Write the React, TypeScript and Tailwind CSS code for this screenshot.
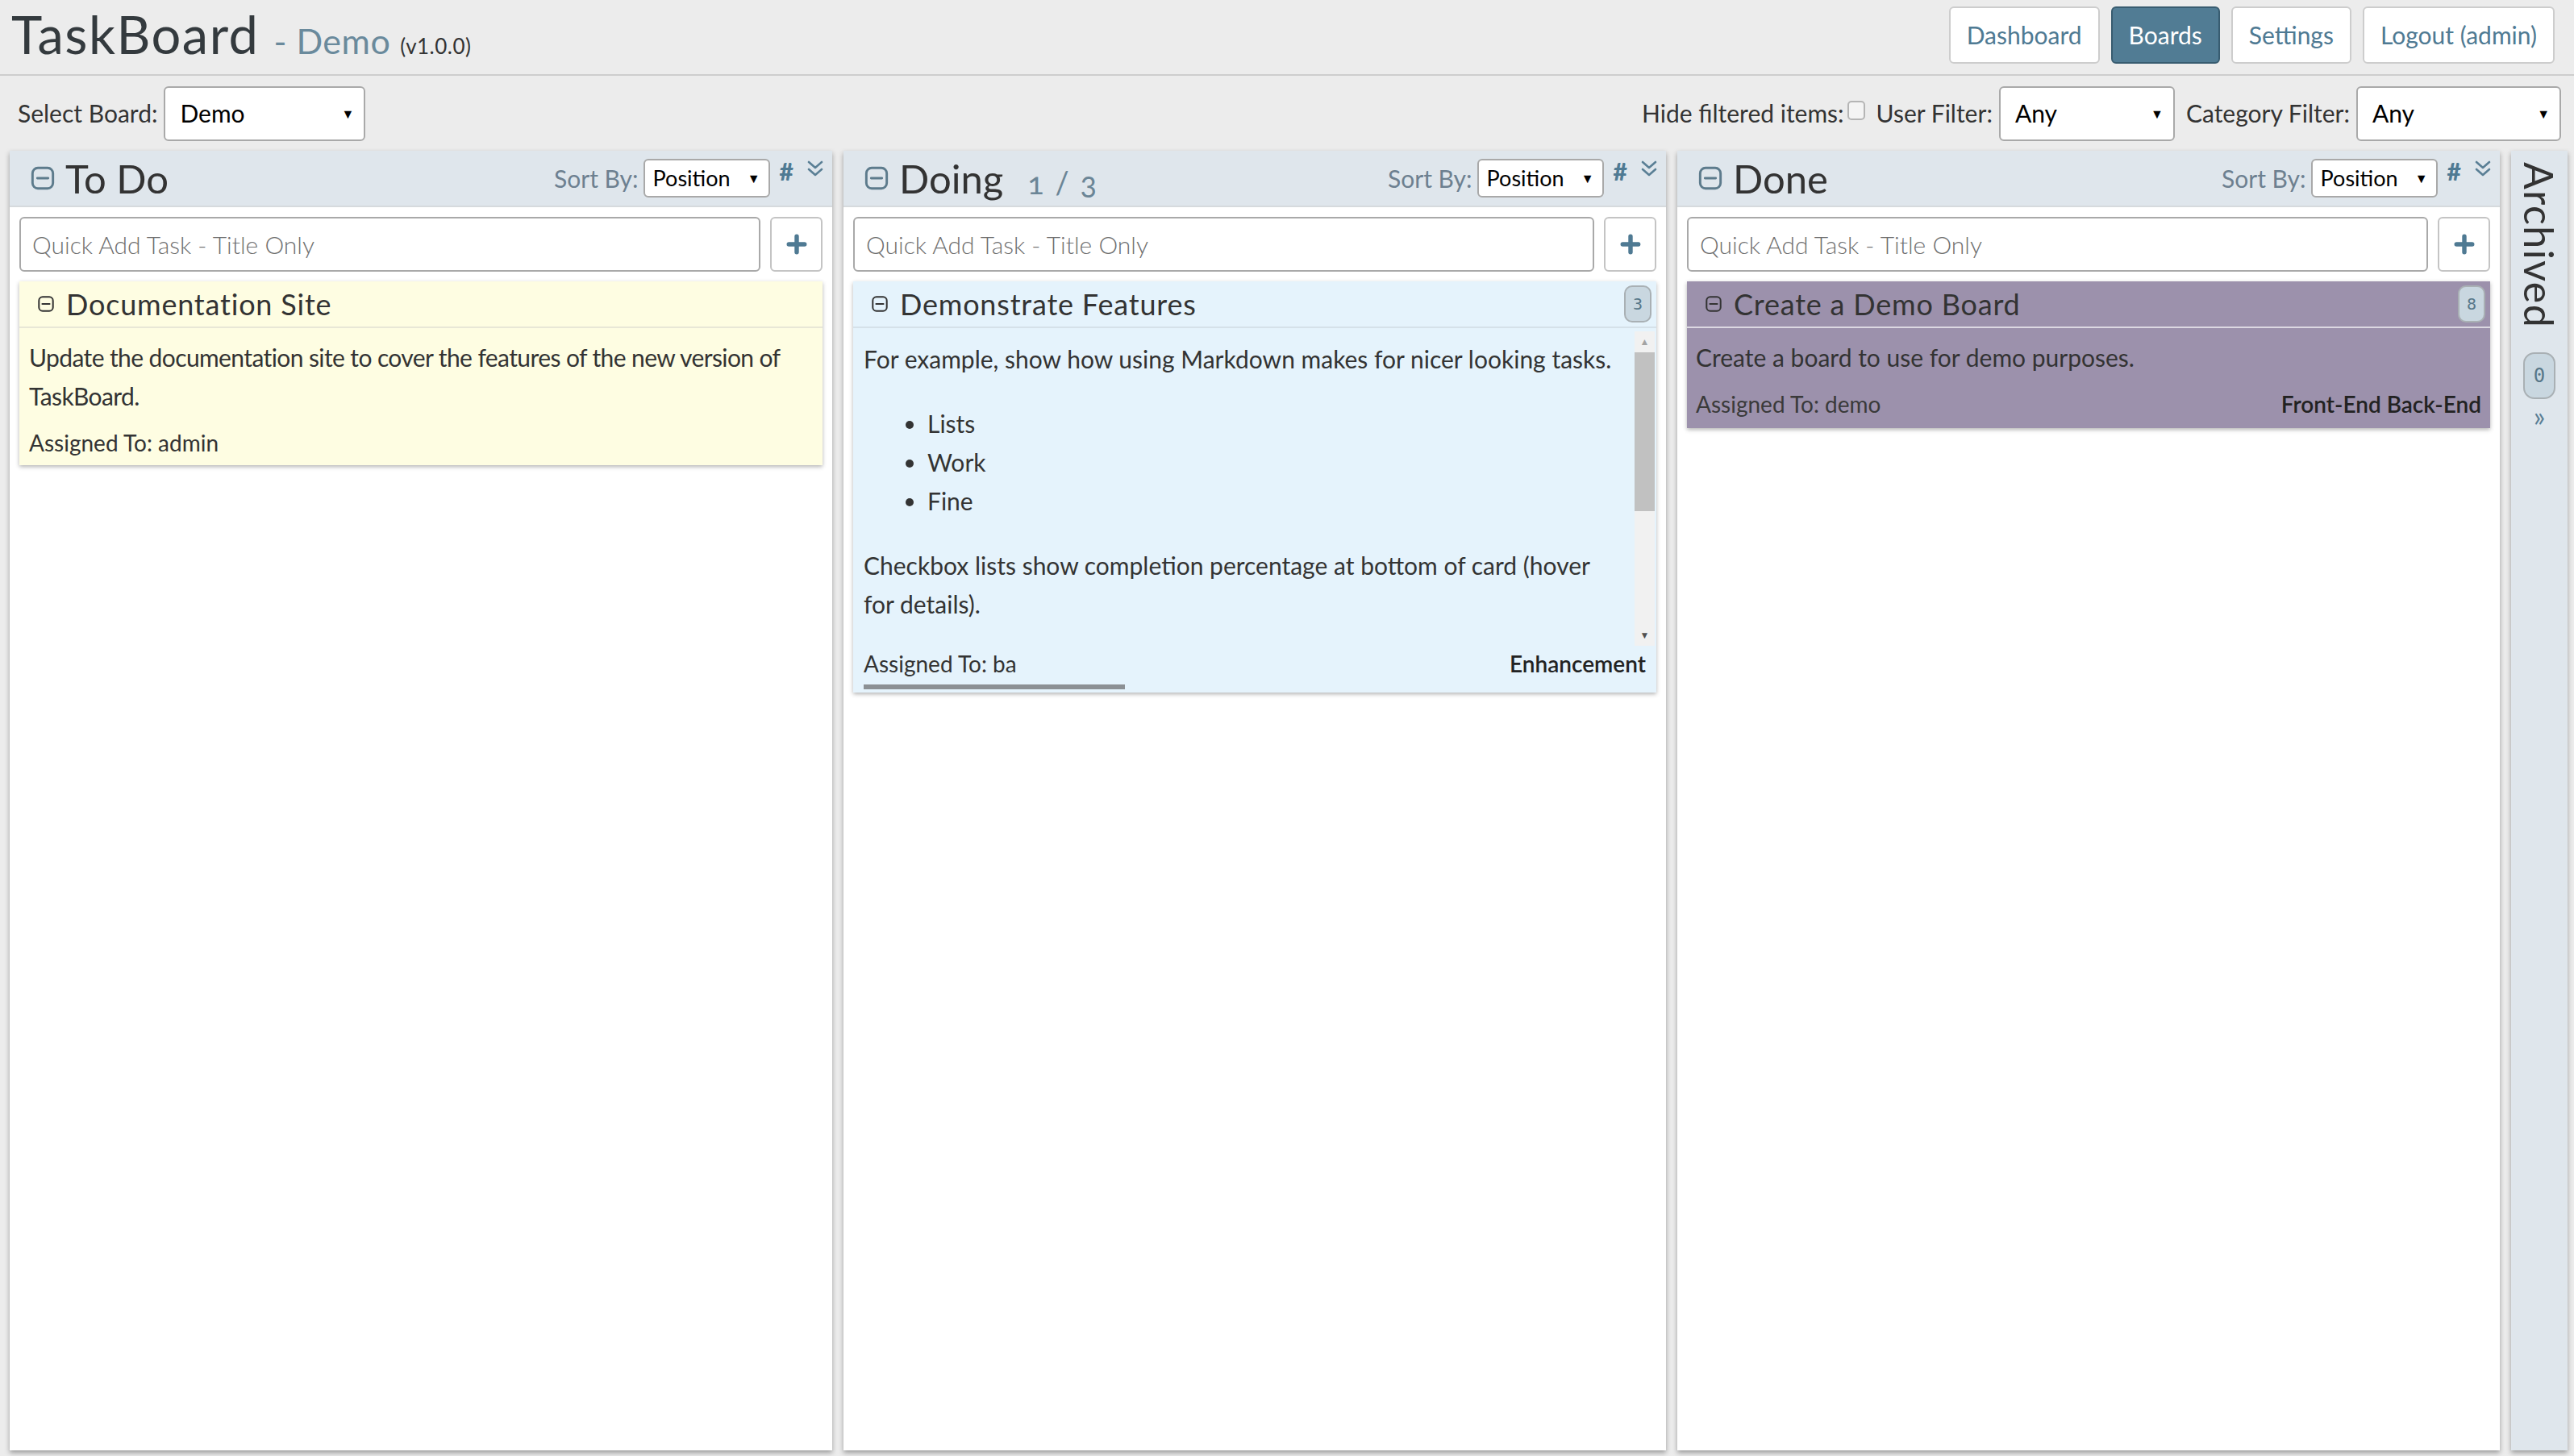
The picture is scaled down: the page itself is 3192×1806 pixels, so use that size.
import React from "react";

function MinusBox({ className }: { className: string }) {
  return (
    <svg aria-hidden="true" className={className} viewBox="0 0 24 24" fill="none">
      <rect x="2.5" y="2.5" width="19" height="19" rx="5" stroke="currentColor" strokeWidth="2.2" />
      <path d="M7 12h10" stroke="currentColor" strokeWidth="2.2" strokeLinecap="round" />
    </svg>
  );
}

function PlusIcon() {
  return (
    <svg aria-hidden="true" className="h-[26px] w-[26px] text-[#4f7a93]" viewBox="0 0 24 24" fill="none">
      <path d="M12 3v18M3 12h18" stroke="currentColor" strokeWidth="5" strokeLinecap="round" />
    </svg>
  );
}

function ChevronsDown() {
  return (
    <svg aria-hidden="true" className="h-[26px] w-[22px] text-[#5a7f95]" viewBox="0 0 22 26" fill="none">
      <path d="M3 4l8 7 8-7M3 13l8 7 8-7" stroke="currentColor" strokeWidth="2.6" strokeLinecap="round" strokeLinejoin="round" />
    </svg>
  );
}

function Badge({ n, big }: { n: string; big?: boolean }) {
  return (
    <span
      className={
        big
          ? "flex h-[58px] w-[40px] items-center justify-center rounded-[14px] border-2 border-[#a9b0b4] bg-[#c9d7e0] font-['DejaVu_Sans_Mono',monospace] text-[24px] text-[#587789]"
          : "flex h-[46px] w-[34px] items-center justify-center rounded-[10px] border-2 border-[#a9b0b4] bg-[#c9d7e0] font-['DejaVu_Sans_Mono',monospace] text-[20px] text-[#587789]"
      }
    >
      {n}
    </span>
  );
}

function Arrow() {
  return <span className="text-[16px] leading-none text-black">▼</span>;
}

function ColumnHeader({ title, extra }: { title: string; extra?: React.ReactNode }) {
  return (
    <div className="flex h-[70px] shrink-0 items-center justify-between border-b-2 border-[#d6dadd] bg-[#dfe6ec] pl-[25px] pr-[10px]">
      <div className="flex items-center">
        <MinusBox className="h-[32px] w-[32px] text-[#5d7b8c]" />
        <span className="ml-[12px] text-[49px] leading-none text-[#333]">{title}</span>
        {extra}
      </div>
      <div className="flex h-full items-center">
        <span className="text-[30px] text-[#6d8090]">Sort By:</span>
        <div className="ml-[6px] flex h-[48px] w-[157px] items-center justify-between rounded-[6px] border-2 border-[#a9a9a9] bg-white pl-[10px] pr-[10px] text-[27px] text-black">
          <span>Position</span>
          <Arrow />
        </div>
        <div className="ml-[12px] flex gap-[16px] self-start pt-[10px]">
          <span className="text-[30px] font-black leading-none text-[#4f7a93]">#</span>
          <ChevronsDown />
        </div>
      </div>
    </div>
  );
}

function QuickAdd() {
  return (
    <div className="flex gap-[12px]">
      <div className="flex h-[68px] flex-1 items-center rounded-[6px] border-2 border-[#a9a9a9] bg-white pl-[14px] text-[30px] font-light text-[#6f6f6f]">
        Quick Add Task - Title Only
      </div>
      <div className="flex h-[68px] w-[65px] items-center justify-center rounded-[6px] border-2 border-[#c4c4c4] bg-white">
        <PlusIcon />
      </div>
    </div>
  );
}

export default function App() {
  return (
    <div className="h-[1806px] overflow-hidden bg-[#ececec] font-['Lato','Open_Sans',sans-serif] text-[#333]">
      <header className="flex h-[94px] items-start justify-between border-b-2 border-[#cdcdcd] pl-[14px] pr-[24px]">
        <div className="flex items-baseline">
          <h1 className="text-[65px] leading-[84px] tracking-[1.5px] text-[#343a3e]">TaskBoard</h1>
          <span className="ml-[18px] text-[43px] tracking-[0.5px] text-[#6a8a9c]">- Demo</span>
          <span className="ml-[12px] text-[26px] tracking-[0.5px] text-[#333]">(v1.0.0)</span>
        </div>
        <nav className="flex gap-[14px] pt-[8px]">
          <span className="flex h-[71px] items-center rounded-[6px] border-2 border-[#cdcdcd] bg-white px-[20px] text-[30px] text-[#4f7a93]">Dashboard</span>
          <span className="flex h-[71px] items-center rounded-[6px] border-2 border-[#385c70] bg-[#517c94] px-[20px] text-[30px] text-white">Boards</span>
          <span className="flex h-[71px] items-center rounded-[6px] border-2 border-[#cdcdcd] bg-white px-[20px] text-[30px] text-[#4f7a93]">Settings</span>
          <span className="flex h-[71px] items-center rounded-[6px] border-2 border-[#cdcdcd] bg-white px-[20px] text-[30px] text-[#4f7a93]">Logout (admin)</span>
        </nav>
      </header>

      <div className="flex h-[93px] items-center justify-between pl-[22px] pr-[16px] text-[30px] text-[#333]">
        <div className="flex items-center gap-[8px]">
          <span>Select Board:</span>
          <div className="flex h-[68px] w-[250px] items-center justify-between rounded-[6px] border-2 border-[#a9a9a9] bg-white pl-[18px] pr-[12px] text-black">
            <span>Demo</span>
            <Arrow />
          </div>
        </div>
        <div className="flex items-center">
          <span>Hide filtered items:</span>
          <span className="mb-[8px] ml-[4px] h-[24px] w-[22px] rounded-[5px] border-2 border-[#b5b5b5] bg-[#f4f4f4]" />
          <span className="ml-[14px]">User Filter:</span>
          <div className="ml-[8px] flex h-[68px] w-[218px] items-center justify-between rounded-[6px] border-2 border-[#a9a9a9] bg-white pl-[18px] pr-[12px] text-black">
            <span>Any</span>
            <Arrow />
          </div>
          <span className="ml-[14px]">Category Filter:</span>
          <div className="ml-[8px] flex h-[68px] w-[254px] items-center justify-between rounded-[6px] border-2 border-[#a9a9a9] bg-white pl-[18px] pr-[12px] text-black">
            <span>Any</span>
            <Arrow />
          </div>
        </div>
      </div>

      <div className="flex h-[1612px] gap-[14px] pl-[12px] pr-[8px]">
        {/* To Do */}
        <section className="flex w-[1020px] flex-col bg-white shadow-[0_3px_6px_rgba(0,0,0,0.35)]">
          <ColumnHeader title="To Do" />
          <div className="flex flex-col gap-[12px] p-[12px]">
            <QuickAdd />
            <div className="bg-[#fefde2] shadow-[0_2px_5px_rgba(0,0,0,0.3)]">
              <div className="flex h-[58px] items-center border-b-2 border-[#e8e7d6] pl-[22px] pr-[10px]">
                <MinusBox className="h-[22px] w-[22px] text-[#333]" />
                <span className="ml-[14px] text-[36px] tracking-[0.8px] text-[#333]">Documentation Site</span>
              </div>
              <div className="px-[12px] pb-[10px] pt-[12px]">
                <p className="text-[30px] leading-[48px] tracking-[-0.6px] text-[#333]">
                  Update the documentation site to cover the features of the new version of TaskBoard.
                </p>
                <div className="mt-[16px] text-[28px] leading-[36px] text-[#333]">Assigned To: admin</div>
              </div>
            </div>
          </div>
        </section>

        {/* Doing */}
        <section className="flex w-[1020px] flex-col bg-white shadow-[0_3px_6px_rgba(0,0,0,0.35)]">
          <ColumnHeader
            title="Doing"
            extra={<span className="ml-[30px] mt-[10px] text-[38px] tracking-[2px] text-[#6b8596] [font-feature-settings:'onum']">1 / 3</span>}
          />
          <div className="flex flex-col gap-[12px] p-[12px]">
            <QuickAdd />
            <div className="bg-[#e5f3fc] shadow-[0_2px_5px_rgba(0,0,0,0.3)]">
              <div className="flex h-[58px] items-center justify-between border-b-2 border-[#d5e1e9] pl-[22px] pr-[6px]">
                <div className="flex items-center">
                  <MinusBox className="h-[22px] w-[22px] text-[#333]" />
                  <span className="ml-[14px] text-[36px] tracking-[0.8px] text-[#333]">Demonstrate Features</span>
                </div>
                <Badge n="3" />
              </div>
              <div className="flex h-[394px] pl-[13px] pr-[2px] pt-[4px]">
                <div className="flex-1 overflow-hidden pr-[24px] pt-[10px] text-[30px] leading-[48px] text-[#333]">
                  <p>For example, show how using Markdown makes for nicer looking tasks.</p>
                  <ul className="mt-[32px] list-disc pl-[79px]">
                    <li>Lists</li>
                    <li>Work</li>
                    <li>Fine</li>
                  </ul>
                  <p className="mt-[32px]">Checkbox lists show completion percentage at bottom of card (hover for details).</p>
                </div>
                <div className="flex w-[25px] flex-col items-center bg-[#f1f1f1]">
                  <div className="flex h-[26px] items-center text-[12px] leading-none text-[#a3a3a3]">▲</div>
                  <div className="h-[197px] w-full bg-[#c1c1c1]" />
                  <div className="flex-1" />
                  <div className="flex h-[26px] items-center text-[12px] leading-none text-[#505050]">▼</div>
                </div>
              </div>
              <div className="flex items-center justify-between px-[13px] pt-[4px] text-[28px] leading-[36px]">
                <span className="text-[#333]">Assigned To: ba</span>
                <span className="font-semibold text-[#222]">Enhancement</span>
              </div>
              <div className="px-[13px] pb-[4px] pt-[8px]">
                <div className="h-[6px] w-[324px] bg-[#8c9094]" />
              </div>
            </div>
          </div>
        </section>

        {/* Done */}
        <section className="flex w-[1020px] flex-col bg-white shadow-[0_3px_6px_rgba(0,0,0,0.35)]">
          <ColumnHeader title="Done" />
          <div className="flex flex-col gap-[12px] p-[12px]">
            <QuickAdd />
            <div className="bg-[#9c91ac] shadow-[0_2px_5px_rgba(0,0,0,0.3)]">
              <div className="flex h-[58px] items-center justify-between border-b-2 border-[#dcd8e2] pl-[22px] pr-[6px]">
                <div className="flex items-center">
                  <MinusBox className="h-[22px] w-[22px] text-[#333]" />
                  <span className="ml-[14px] text-[36px] tracking-[0.8px] text-[#333]">Create a Demo Board</span>
                </div>
                <Badge n="8" />
              </div>
              <div className="px-[11px] pb-[12px] pt-[12px]">
                <p className="text-[30px] leading-[48px] text-[#333]">Create a board to use for demo purposes.</p>
                <div className="mt-[16px] flex items-center justify-between text-[28px] leading-[36px]">
                  <span className="text-[#3a3a3a]">Assigned To: demo</span>
                  <span className="font-semibold text-[#222]">Front-End Back-End</span>
                </div>
              </div>
            </div>
          </div>
        </section>

        {/* Archived */}
        <aside className="flex w-[70px] flex-col items-center bg-[#dfe6ec] pt-[14px] shadow-[0_3px_6px_rgba(0,0,0,0.35)]">
          <span className="text-[50px] leading-none tracking-[1.5px] text-[#333] [writing-mode:vertical-rl]">Archived</span>
          <div className="mt-[30px]">
            <Badge n="0" big />
          </div>
          <span className="mt-[4px] text-[34px] leading-none text-[#5a7f95]">»</span>
        </aside>
      </div>
    </div>
  );
}
